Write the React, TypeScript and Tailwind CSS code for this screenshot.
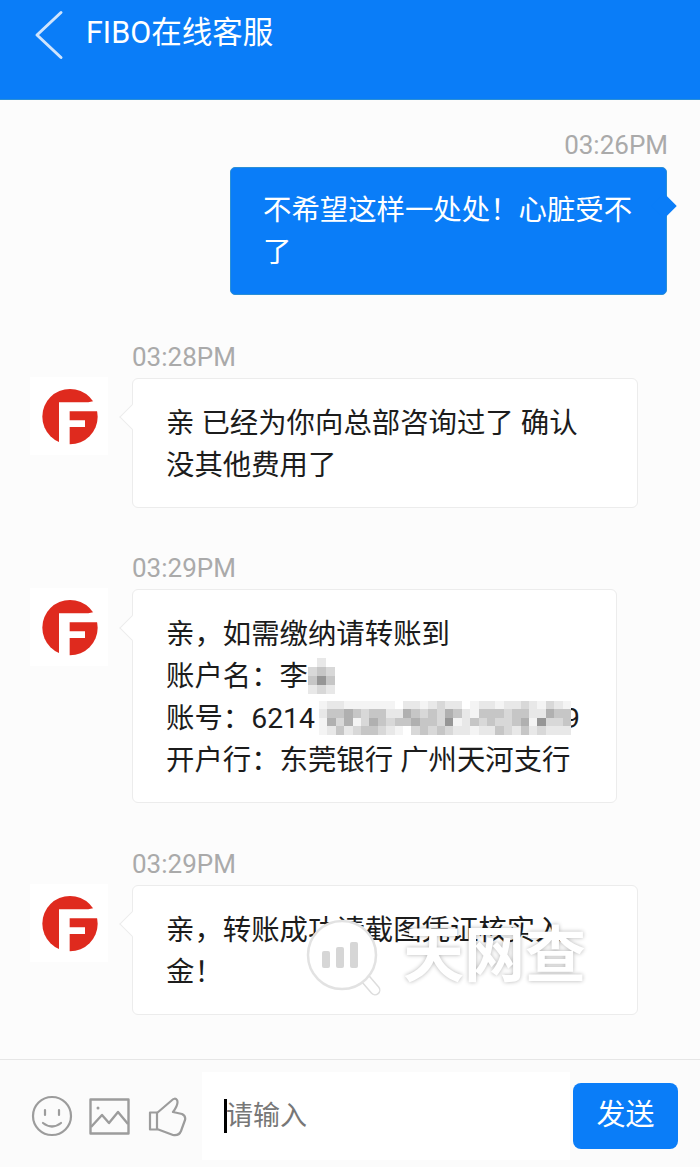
const MOSAIC_COLORS: Record<string, string> = {
  w: "#ffffff",
  a: "#f4f4f4",
  b: "#e8e8e8",
  c: "#d8d8d8",
  d: "#c6c6c6",
  e: "#b0b0b0",
  f: "#969696",
};

const ACCOUNT_MOSAIC = [
  "abbaaaaaawbbabcbbwabbabbcbacba",
  "bddedcddbbedcdcedbadddcddbbedd",
  "aeceacedcddeddcfabdcdccdeafccd",
  "abdbcddcbawcdcdcbbabbdcbdbcbbb",
];

const NAME_MOSAIC = ["wbw", "cdc", "dfd", "bcb"];

const Mosaic = ({ rows, cell, className }: { rows: string[]; cell: number; className?: string }) => (
  <svg className={className} width={rows[0].length * cell} height={rows.length * cell} shapeRendering="crispEdges">
    {rows.map((row, y) =>
      row.split("").map((c, x) => (
        <rect key={`${x}-${y}`} x={x * cell} y={y * cell} width={cell} height={cell} fill={MOSAIC_COLORS[c]} />
      ))
    )}
  </svg>
);

const Avatar = () => (
  <div className="w-[78px] h-[78px] bg-white shrink-0 -mt-px">
    <svg viewBox="-15 -18 234 234" className="w-full h-full">
      <circle cx="105" cy="101" r="83" fill="#df2a1e" />
      <path d="M72 195V58H160L195 50V85H104V112H150V132H104V195Z" fill="#ffffff" />
    </svg>
  </div>
);

const Time = ({ children, className = "" }: { children: string; className?: string }) => (
  <div className={`h-[30px] leading-[30px] text-[26px] text-[#aaaaaa] ${className}`}>{children}</div>
);

// received bubble, arrow sticks out on the left towards the avatar
const Received = ({ width, children }: { width: string; children: React.ReactNode }) => (
  <div className="flex gap-[24px] pl-[30px]">
    <Avatar />
    <div className={`relative bg-white border border-[#ececec] rounded-[6px] pl-[33px] pt-[24px] pb-[20px] text-[28.4px] leading-[42px] text-[#1c1c1c] whitespace-nowrap ${width}`}>
      <div className="absolute -left-[10px] top-[29px] w-[18px] h-[18px] rotate-45 bg-white border-l border-b border-[#ececec]" />
      <div className="relative">{children}</div>
    </div>
  </div>
);

export default function App() {
  return (
    <div className="w-[700px] h-[1167px] flex flex-col bg-[#fcfcfc] overflow-hidden font-['Roboto','Noto_Sans_CJK_SC',sans-serif]">
      {/* Header */}
      <div className="h-[100px] shrink-0 bg-[#0a7df8] border-b border-[#2b8fd6] flex items-start pt-[10px] pl-[34px]">
        <svg width="30" height="50" viewBox="0 0 30 50" fill="none" stroke="#cfe4fd" strokeWidth="3" strokeLinecap="round" strokeLinejoin="round">
          <path d="M27 2.5L3 25L27 47.5" />
        </svg>
        <span className="ml-[22px] text-[30.5px] leading-[46px] text-white">FIBO在线客服</span>
      </div>

      {/* Messages */}
      <div className="relative flex-1 pt-[30px]">
        <Time className="text-right pr-[32px]">03:26PM</Time>
        <div className="flex justify-end pr-[33px] mt-[7px]">
          <div className="relative w-[437px] h-[128px] bg-[#0a7df8] rounded-[5px] border border-[#2b8fd6] pl-[32px] pt-[22px] text-[28.4px] leading-[42px] text-white whitespace-nowrap">
            <div className="absolute -right-[7px] top-[29px] w-[18px] h-[18px] rotate-45 bg-[#0a7df8]" />
            <div className="relative">
              不希望这样一处处&#xFF01;心脏受不
              <br />了
            </div>
          </div>
        </div>

        <Time className="pl-[132px] mt-[47px]">03:28PM</Time>
        <div className="mt-[6px]">
          <Received width="w-[506px] h-[130px]">
            亲 已经为你向总部咨询过了 确认
            <br />
            没其他费用了
          </Received>
        </div>

        <Time className="pl-[132px] mt-[45px]">03:29PM</Time>
        <div className="mt-[6px]">
          <Received width="w-[485px] h-[214px]">
            <div>亲&#xFF0C;如需缴纳请转账到</div>
            <div className="flex items-start">
              账户名&#xFF1A;李
              <Mosaic rows={NAME_MOSAIC} cell={9} className="mt-[2px]" />
            </div>
            <div className="flex items-start">
              账号&#xFF1A;6214
              <Mosaic rows={ACCOUNT_MOSAIC} cell={8.4} className="relative z-10 mt-[3px] ml-[4px]" />
              <span className="-ml-[7px]">9</span>
            </div>
            <div>开户行&#xFF1A;东莞银行 广州天河支行</div>
          </Received>
        </div>

        <Time className="pl-[132px] mt-[46px]">03:29PM</Time>
        <div className="mt-[6px]">
          <Received width="w-[506px] h-[130px]">
            亲&#xFF0C;转账成功请截图凭证核实入
            <br />
            金&#xFF01;
          </Received>
        </div>

        {/* Watermark */}
        <div className="absolute left-[303px] top-[814px] flex items-center">
          <svg width="84" height="84" viewBox="0 0 84 84">
            <path d="M60 62L72 76" stroke="#dddddd" strokeWidth="11" strokeLinecap="round" />
            <path d="M60 62L72 76" stroke="#ffffff" strokeWidth="8" strokeLinecap="round" />
            <circle cx="39" cy="41" r="34" fill="#ffffff" stroke="#e2e2e2" strokeWidth="2.5" />
            <rect x="19" y="37" width="8" height="17" rx="2" fill="#d6d6d6" />
            <rect x="33" y="33" width="8" height="21" rx="2" fill="#d6d6d6" />
            <rect x="47" y="28" width="8" height="26" rx="2" fill="#d6d6d6" />
          </svg>
          <span className="ml-[16px] text-[61px] leading-[70px] font-bold text-white [text-shadow:0_0_4px_rgba(0,0,0,0.3)]">天网查</span>
        </div>
      </div>

      {/* Input bar */}
      <div className="h-[108px] shrink-0 bg-[#fbfbfb] border-t border-[#e6e6e6] flex items-center pt-[5px] pl-[31px]">
        <svg width="42" height="42" viewBox="0 0 42 42" fill="none" stroke="#9c9c9c" strokeWidth="2.2" strokeLinecap="round">
          <circle cx="21" cy="21" r="19" />
          <path d="M14 15v5M28 15v5M12 28q9 7 18 0" />
        </svg>
        <svg className="ml-[16px]" width="41" height="37" viewBox="0 0 41 37" fill="none" stroke="#9c9c9c" strokeWidth="2.4" strokeLinejoin="round">
          <rect x="1.5" y="1.5" width="38" height="34" />
          <path d="M2 29L13 17L20 25L29 14L39 26" />
          <circle cx="9" cy="10" r="1.5" fill="#9c9c9c" stroke="none" />
        </svg>
        <svg className="ml-[18px]" width="40" height="42" viewBox="8 2 40 42" fill="none" stroke="#9c9c9c" strokeWidth="2.2" strokeLinejoin="round">
          <rect x="10" y="19.5" width="7" height="17" />
          <path d="M17 20L31 8Q35 4 37 7Q39 11 33 19L42 21Q46 23 45 27L41 38Q39 43 33 42L17 36" />
        </svg>
        <div className="ml-[14px] w-[368px] h-[88px] bg-white flex items-center pl-[22px]">
          <div className="w-[3px] h-[34px] bg-black -mr-[1px]" />
          <span className="text-[27px] text-[#777777]">请输入</span>
        </div>
        <button className="ml-[3px] w-[105px] h-[66px] bg-[#0a7df8] rounded-[8px] text-white text-[29px]">发送</button>
      </div>
    </div>
  );
}
